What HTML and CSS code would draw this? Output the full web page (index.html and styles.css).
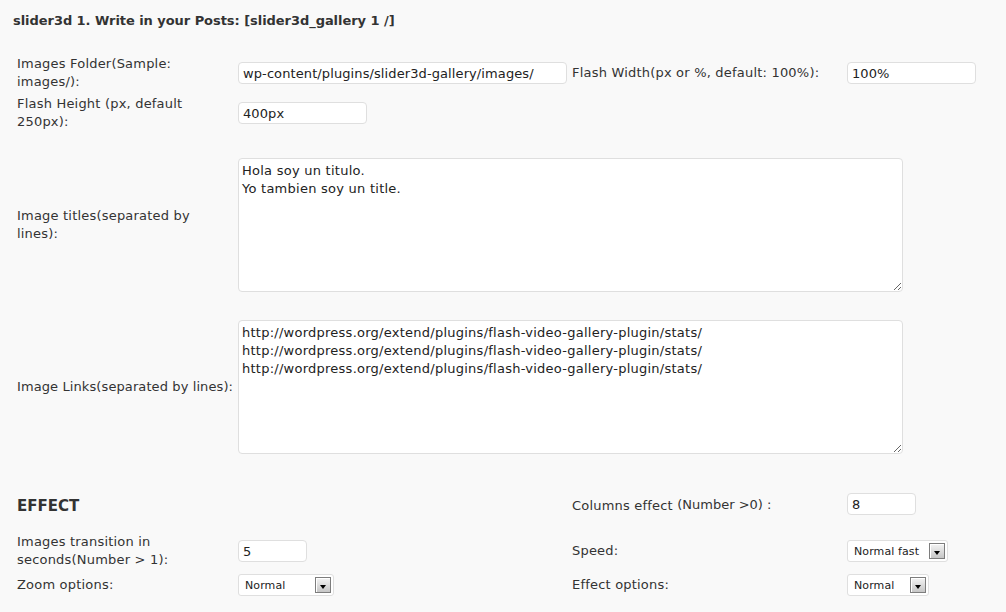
FILE: index.html
```html
<!DOCTYPE html>
<html>
<head>
<meta charset="utf-8">
<link rel="stylesheet" href="styles.css">
</head>
<body>
<div class="page">
  <h2 class="title">slider3d 1. Write in your Posts: [slider3d_gallery 1 /]</h2>
  <div class="form">
    <div class="row r1">
      <label class="lbl">Images Folder(Sample:<br>images/):</label>
      <div class="cell"><input class="inp w-long" type="text" value="wp-content/plugins/slider3d-gallery/images/"></div>
      <label class="lbl">Flash Width(px or %, default: 100%):</label>
      <div class="cell"><input class="inp w-mid" type="text" value="100%"></div>
    </div>
    <div class="row r2">
      <label class="lbl">Flash Height (px, default<br>250px):</label>
      <div class="cell"><input class="inp w-mid" type="text" value="400px"></div>
    </div>
    <div class="row r3">
      <label class="lbl">Image titles(separated by<br>lines):</label>
      <div class="cell span2"><textarea class="ta">Hola soy un titulo.
Yo tambien soy un title.</textarea></div>
    </div>
    <div class="row r4">
      <label class="lbl">Image Links(separated by lines):</label>
      <div class="cell span2"><textarea class="ta">http://wordpress.org/extend/plugins/flash-video-gallery-plugin/stats/
http://wordpress.org/extend/plugins/flash-video-gallery-plugin/stats/
http://wordpress.org/extend/plugins/flash-video-gallery-plugin/stats/</textarea></div>
    </div>
    <div class="row r5">
      <h3 class="section">EFFECT</h3>
      <div class="cell"></div>
      <label class="lbl">Columns effect <span class="note">(Number &gt;0) :</span></label>
      <div class="cell"><input class="inp w-short" type="text" value="8"></div>
    </div>
    <div class="row r6">
      <label class="lbl">Images transition in<br>seconds(Number &gt; 1):</label>
      <div class="cell"><input class="inp w-short" type="text" value="5"></div>
      <label class="lbl">Speed:</label>
      <div class="cell"><div class="select w-speed"><span class="sel-text">Normal fast</span><span class="sel-btn"></span></div></div>
    </div>
    <div class="row r7">
      <label class="lbl">Zoom options:</label>
      <div class="cell"><div class="select w-zoom"><span class="sel-text">Normal</span><span class="sel-btn"></span></div></div>
      <label class="lbl">Effect options:</label>
      <div class="cell"><div class="select w-effect"><span class="sel-text">Normal</span><span class="sel-btn"></span></div></div>
    </div>
  </div>
</div>
</body>
</html>
```
FILE: styles.css
```css
html, body {
  margin: 0;
  padding: 0;
  background: #f9f9f9;
}
body {
  font-family: "DejaVu Sans", Verdana, sans-serif;
  font-size: 13px;
  color: #333;
}
.page {
  padding: 12px 0 0 13px;
}
.title {
  margin: 0;
  font-size: 13px;
  font-weight: bold;
  line-height: 18px;
  letter-spacing: -0.05px;
  color: #333;
}
.form {
  display: flex;
  flex-direction: column;
  margin-top: 25px;
}
.row {
  display: grid;
  grid-template-columns: 225px 330px 279px 1fr;
  align-items: center;
}
.r2 { margin-top: 4px; }
.r3 { margin-top: 27px; }
.r4 { margin-top: 28px; }
.r5 { margin-top: 38px; }
.r6 { margin-top: 17px; }
.r7 { margin-top: 5px; }
.lbl {
  display: block;
  padding-left: 4px;
  line-height: 18px;
  letter-spacing: 0.2px;
  color: #333;
}
.r4 .lbl {
  letter-spacing: 0.1px;
}
.r5 .lbl, .r5 .section {
  padding-top: 4px;
}
.note {
  position: relative;
  top: -1px;
  letter-spacing: 0;
}
.span2 {
  grid-column: 2 / span 3;
}
.cell {
  display: flex;
  align-items: center;
}
.inp {
  box-sizing: border-box;
  height: 22px;
  margin: 0;
  padding: 0 4px;
  border: 1px solid #dfdfdf;
  border-radius: 4px;
  background: #fff;
  font-family: "DejaVu Sans", Verdana, sans-serif;
  font-size: 13px;
  letter-spacing: 0.1px;
  color: #222;
  outline: none;
}
.w-long { width: 329px; }
.w-mid { width: 129px; }
.w-short { width: 69px; }
.ta {
  box-sizing: border-box;
  flex: none;
  width: 665px;
  height: 134px;
  margin: 0;
  padding: 3px 3px;
  border: 1px solid #dfdfdf;
  border-radius: 4px;
  background: #fff;
  font-family: "DejaVu Sans", Verdana, sans-serif;
  font-size: 13px;
  line-height: 18px;
  letter-spacing: 0.25px;
  color: #222;
  outline: none;
  resize: both;
  overflow: hidden;
}
.section {
  margin: 0;
  padding-left: 4px;
  font-size: 15px;
  font-weight: bold;
  line-height: 20px;
  color: #333;
}
.select {
  box-sizing: border-box;
  display: flex;
  align-items: center;
  height: 22px;
  padding: 0 2px 0 6px;
  border: 1px solid #dfdfdf;
  border-radius: 3px;
  background: #fff;
  font-size: 11px;
  letter-spacing: 0.1px;
  color: #222;
}
.w-speed { width: 101px; }
.w-zoom { width: 96px; }
.w-effect { width: 82px; }
.sel-text {
  flex: 1;
  white-space: nowrap;
}
.sel-btn {
  box-sizing: border-box;
  width: 16px;
  height: 16px;
  flex: none;
  display: flex;
  justify-content: center;
  align-items: center;
  padding-top: 3px;
  border: 1px solid #7d7d7d;
  background: linear-gradient(#f4f4f4, #c6c6c6);
  box-shadow: inset 1px 1px 0 #fff;
}
.sel-btn::after {
  content: "";
  width: 0;
  height: 0;
  border-left: 3.5px solid transparent;
  border-right: 3.5px solid transparent;
  border-top: 4px solid #000;
}
```
